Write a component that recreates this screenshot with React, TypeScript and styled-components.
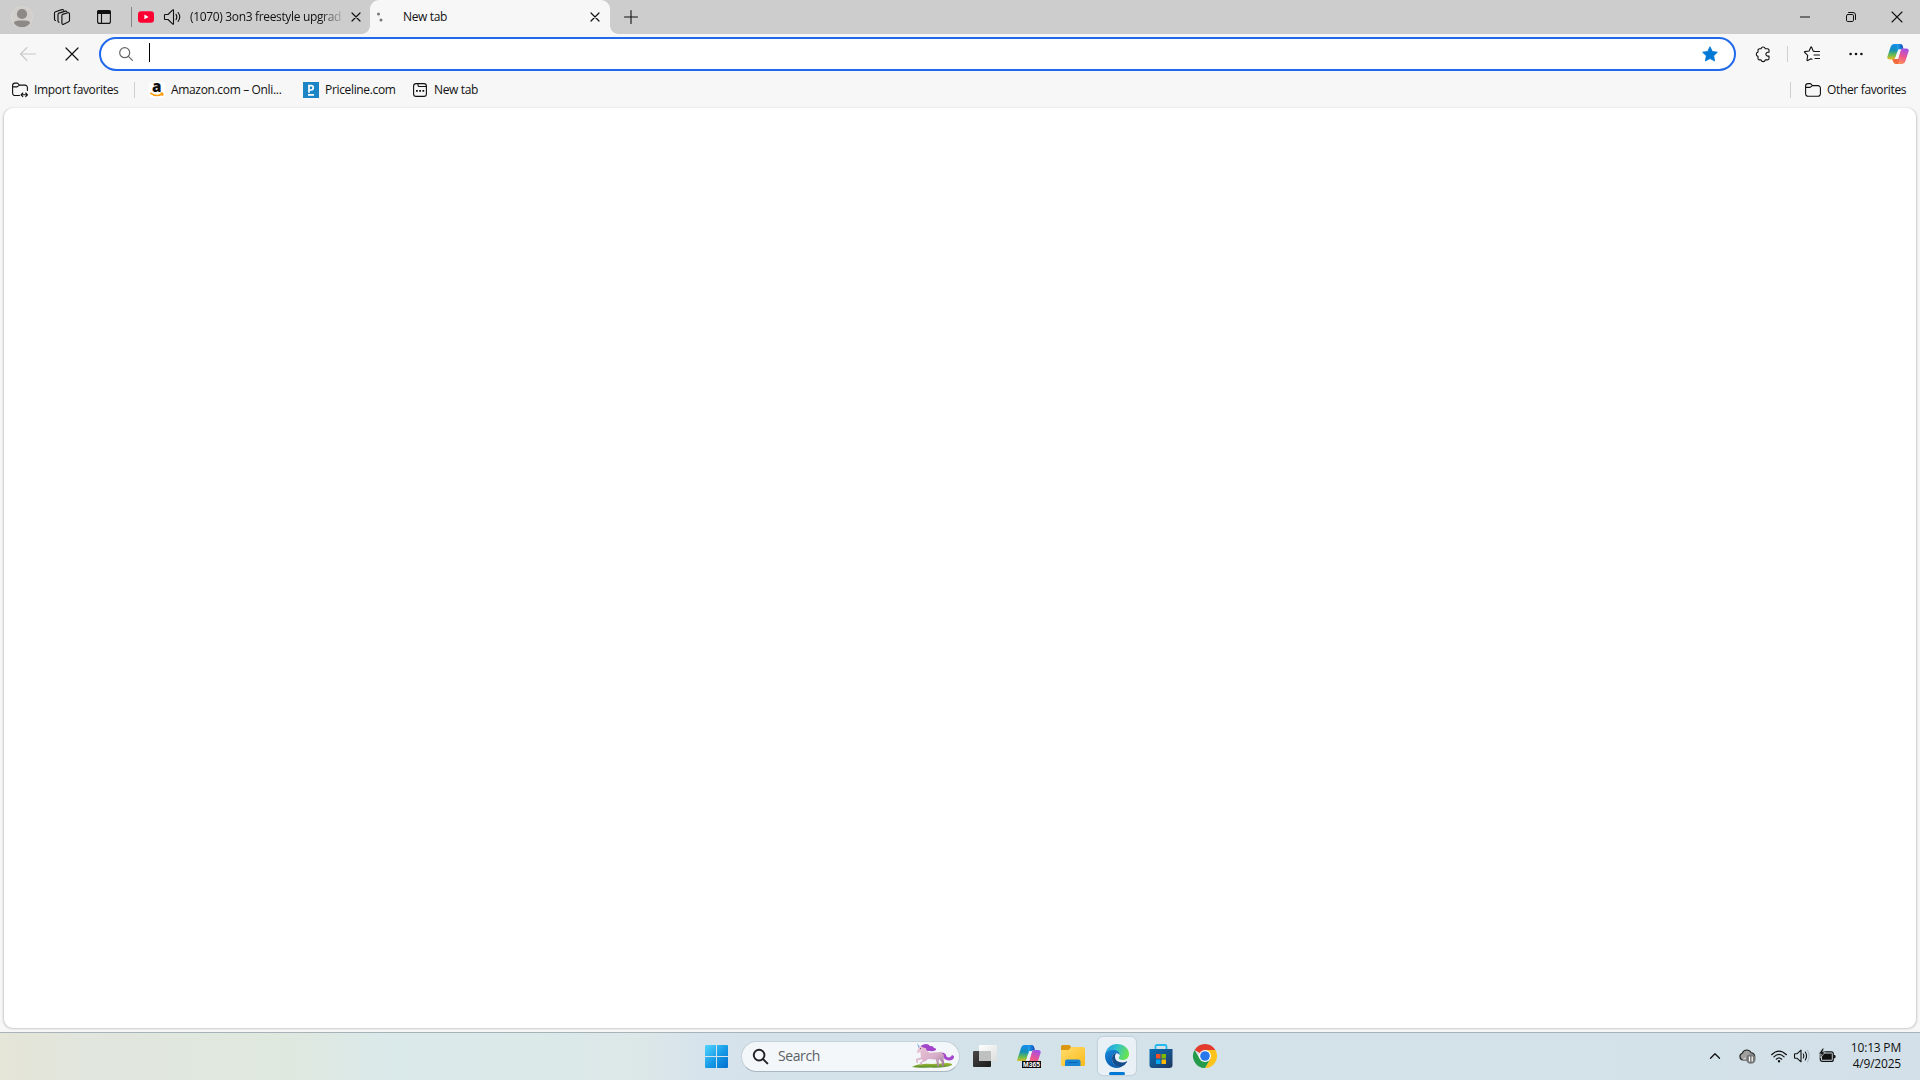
import React from "react";
import styled, { createGlobalStyle } from "styled-components";

const Global = createGlobalStyle`
  * { box-sizing: border-box; }
  body { margin: 0; overflow: hidden; background: #f7f7f7; }
  svg { display: block; flex: none; overflow: visible; }
`;

const Screen = styled.div`
  width: 1920px;
  height: 1080px;
  display: flex;
  flex-direction: column;
  background: #f7f7f7;
  font: 12px/16px "Segoe UI", "Open Sans", "Noto Sans", sans-serif;
  color: #111;
`;
const TabStrip = styled.header`
  height: 34px;
  display: flex;
  align-items: center;
  background: #cdcdcd;
`;
const Slot = styled.div<{ $w: number }>`
  width: ${(p) => p.$w}px;
  height: 100%;
  flex: none;
  display: flex;
  align-items: center;
  justify-content: center;
`;
const Divider = styled.i<{ $h: number; $color: string; $ml?: number; $mr?: number }>`
  width: 1px;
  height: ${(p) => p.$h}px;
  flex: none;
  margin: 0 ${(p) => p.$mr ?? 0}px 0 ${(p) => p.$ml ?? 0}px;
  background: ${(p) => p.$color};
`;
const Tab = styled.div<{ $active?: boolean }>`
  width: ${(p) => (p.$active ? 240 : 238)}px;
  height: 34px;
  flex: none;
  display: flex;
  align-items: center;
  padding-left: 6px;
  position: relative;
  border-radius: 9px 9px 0 0;
  background: ${(p) => (p.$active ? "#f7f7f7" : "transparent")};
  &::before, &::after {
    content: "";
    display: ${(p) => (p.$active ? "block" : "none")};
    position: absolute;
    bottom: 0;
    width: 8px;
    height: 8px;
  }
  &::before { left: -8px; background: radial-gradient(circle at 0 0, transparent 7.5px, #f7f7f7 8px); }
  &::after { right: -8px; background: radial-gradient(circle at 100% 0, transparent 7.5px, #f7f7f7 8px); }
`;
const Label = styled.span<{ $w: number; $fade?: boolean; $ml?: number }>`
  width: ${(p) => p.$w}px;
  flex: none;
  margin-left: ${(p) => p.$ml ?? 0}px;
  letter-spacing: -0.34px;
  white-space: nowrap;
  ${(p) => p.$fade && "mask-image: linear-gradient(90deg, #000 130px, rgba(0,0,0,.1) 153px);"}
`;
const Spacer = styled.div`flex: 1;`;

const Toolbar = styled.div`
  height: 40px;
  display: flex;
  align-items: center;
`;
const AddressBar = styled.div`
  width: 1637px;
  height: 34px;
  flex: none;
  display: flex;
  align-items: center;
  padding: 0 16px 0 18px;
  border: 2px solid #2169eb;
  border-radius: 17px;
  background: #fff;
`;
const Caret = styled.i`
  width: 1px;
  height: 19px;
  margin: -3px 0 0 16px;
  background: #000;
`;
const Favorites = styled.nav`
  height: 33px;
  display: flex;
  align-items: center;
  padding: 0 0 1px 12px;
`;
const Page = styled.main`
  height: 920px;
  margin: 1px 4px 4px;
  border-radius: 9px;
  background: #fff;
  box-shadow: 0 0.5px 2px 0.5px rgba(0, 0, 0, 0.18);
`;
const Taskbar = styled.footer`
  height: 48px;
  display: flex;
  align-items: center;
  padding-bottom: 1px;
  border-top: 1px solid #a8b2b9;
  background: linear-gradient(90deg, #e5e5d8 0, #e3e5da 50px, #e1e6de 80px, #dfe8df 290px, #dae9ea 390px, #dbe9e9 520px, #dce7e8 640px, #d7e3ec 700px, #d4e2ea 780px, #d3e1e9 1700px, #d3e0e9 1920px);
`;
const SearchBox = styled.div`
  width: 219px;
  height: 31px;
  flex: none;
  display: flex;
  align-items: center;
  margin-left: 13px;
  padding-left: 11px;
  border: 1px solid #c4d1d9;
  border-bottom-color: #a9b7c0;
  border-radius: 16px;
  background: #f3f7fa;
`;
const SearchText = styled.span`
  width: 134px;
  margin-left: 10px;
  font-size: 14px;
  line-height: 20px;
  letter-spacing: -0.4px;
  color: #5c6064;
`;
const AppButton = styled.div<{ $active?: boolean }>`
  width: 38px;
  height: 38px;
  flex: none;
  margin: 0 3px;
  display: flex;
  align-items: center;
  justify-content: center;
  position: relative;
  border-radius: 5px;
  background: ${(p) => (p.$active ? "#e9f1f7" : "transparent")};
  box-shadow: ${(p) => (p.$active ? "0 0 1px 1px rgba(130,150,165,.22)" : "none")};
  &::after {
    content: "";
    display: ${(p) => (p.$active ? "block" : "none")};
    position: absolute;
    bottom: 0;
    left: 11px;
    width: 16px;
    height: 3px;
    border-radius: 2px;
    background: #0078d4;
  }
`;
const Clock = styled.div`
  width: 52px;
  margin: 0 19px 0 5px;
  text-align: right;
  white-space: nowrap;
  letter-spacing: -0.2px;
`;

const stroke = { fill: "none", stroke: "#111", strokeWidth: 1.1, strokeLinecap: "round", strokeLinejoin: "round" } as const;

const Close = ({ s = 8, w = 1.2 }: { s?: number; w?: number }) => (
  <svg width={s} height={s} viewBox={`0 0 ${s} ${s}`} {...stroke} strokeWidth={w}>
    <path d={`M0 0 ${s} ${s}M${s} 0 0 ${s}`} />
  </svg>
);
const Avatar = () => (
  <svg width="22" height="22" viewBox="0 0 22 22">
    <circle cx="11" cy="11" r="10.5" fill="#d0cfcc" stroke="#dbd8d2" />
    <circle cx="11" cy="8" r="5.1" fill="#8d8986" />
    <path d="M3 17.3c0-2.6 3-2.8 8-2.8s8 .2 8 2.8C17 20 14.500 21.200 11 21.200S5 20 3 17.300Z" fill="#8d8986" />
  </svg>
);
const Workspaces = () => (
  <svg width="16" height="16" viewBox="0 0 16 16" {...stroke} strokeWidth={1.15}>
    <path d="m8.500 5.400 5.500-1.700a1.200 1.200 0 0 1 1.500 1.200v6.600a1.500 1.500 0 0 1-.9 1.300l-5 2.400a1.200 1.200 0 0 1-1.700-1V6.700a1.400 1.400 0 0 1 .6-1.300ZM5 13.300a1.500 1.500 0 0 1-1-1.300V5.500A1.500 1.500 0 0 1 5 4.100l6.400-2q1-.3 1.500.6M1.500 11.500a1.500 1.500 0 0 1-1-1.300V4.100a1.500 1.500 0 0 1 1-1.400L8 .6q1.200-.3 1.600.6" />
  </svg>
);
const TabActions = () => (
  <svg width="14" height="14" viewBox="0 0 14 14" {...stroke}>
    <rect x=".6" y=".6" width="12.800" height="12.800" rx="2" />
    <path d="M.6 3.500V2Q.6.600 2 .600h10q1.400 0 1.400 1.400v1.500Z" fill="#111" />
    <path d="M4.500 4v9" />
  </svg>
);
const YouTube = () => (
  <svg width="16" height="12" viewBox="0 0 16 12">
    <rect width="16" height="11.500" y=".2" rx="3" fill="#ff0033" />
    <path d="m6.400 3.500 4.200 2.400-4.200 2.400Z" fill="#fff" />
  </svg>
);
const Speaker = () => (
  <svg width="17" height="16" viewBox="0 0 17 16" {...stroke}>
    <path d="M1 5.500h3L8.800.9q.7-.5.7.4v13.400q0 .9-.7.4L4 10.500H1q-.5 0-.5-.5V6q0-.5.500-.5ZM12 5.300q1.700 2.700 0 5.400M14.100 3.500q3.300 4.500 0 9" />
  </svg>
);
const Spinner = () => (
  <svg width="8" height="12" viewBox="0 0 8 12" fill="#777">
    <circle cx="2.500" cy="3" r="1.500" /><circle cx="5" cy="9" r="1.500" /><circle cx="3" cy="6" r=".6" opacity=".3" />
  </svg>
);
const Plus = () => (
  <svg width="14" height="14" viewBox="0 0 14 14" {...stroke}><path d="M7 .5v13M.5 7h13" /></svg>
);
const Restore = () => (
  <svg width="10" height="10" viewBox="0 0 10 10" {...stroke} strokeWidth={1}>
    <rect x=".5" y="2.500" width="7" height="7" rx="1.300" /><path d="M2.500.5H7A2.500 2.500 0 0 1 9.500 3v4.500" />
  </svg>
);
const Back = () => (
  <svg width="16" height="14" viewBox="0 0 16 14" {...stroke} stroke="#c8c8c8"><path d="M7 .5.500 7 7 13.500M.5 7h15" /></svg>
);
const Search = ({ s = 14, c = "#666", w = 1.2 }: { s?: number; c?: string; w?: number }) => (
  <svg width={s} height={s} viewBox="0 0 14 14" {...stroke} stroke={c} strokeWidth={w}>
    <circle cx="5.700" cy="5.700" r="5" /><path d="m9.400 9.400 4 4" />
  </svg>
);
const starPath = "m8 .7 2.300 4.700 5.100.8-3.700 3.600.9 5.200L8 12.500 3.400 15l.9-5.200L.6 6.200l5.100-.8Z";
const Star = () => (
  <svg width="16" height="16" viewBox="0 0 16 16"><path d={starPath} fill="#0078d4" stroke="#0078d4" strokeWidth=".8" strokeLinejoin="round" /></svg>
);
const Puzzle = () => (
  <svg width="16" height="16" viewBox="0 0 16 16" {...stroke}>
    <path d="M4.500 2.800H6a2.200 2.200 0 0 1 4.300 0h2.200a1.500 1.500 0 0 1 1.500 1.500v2h-1.200a1.900 1.900 0 0 0 0 3.800H14v2.300a1.500 1.500 0 0 1-1.500 1.500h-2.200a2.200 2.200 0 0 1-4.300 0H4.500A1.500 1.500 0 0 1 3 12.400v-2a2.200 2.200 0 0 1 0-4.300V4.300a1.500 1.500 0 0 1 1.500-1.500Z" />
  </svg>
);
const StarList = () => (
  <svg width="16" height="16" viewBox="0 0 16 16" {...stroke}>
    <path d="M11 5.500 9.200 5.100 7.600 1.200q-.4-.8-.8 0L5.100 5l-4.200.6q-.8.200-.3.800l3.100 3-.7 4.600q0 .8.700.5l3.300-1.800 1 .5M11 5.500h4.500M10 9h5.500M11 12.500h4.500" />
  </svg>
);
const Dots = () => (
  <svg width="14" height="4" viewBox="0 0 14 4" fill="#111"><circle cx="1.600" cy="2" r="1.300" /><circle cx="7" cy="2" r="1.300" /><circle cx="12.400" cy="2" r="1.300" /></svg>
);
const Copilot = ({ id, m365 }: { id: string; m365?: boolean }) => (
  <svg width={m365 ? 24 : 22} height={m365 ? 24 : 22} viewBox="0 0 24 24">
    <defs>
      <linearGradient id={id + "a"} x1="0" y1="0" x2="0" y2="1">
        <stop stopColor="#168cf2" /><stop offset=".4" stopColor="#148eb5" /><stop offset=".7" stopColor="#66bc50" /><stop offset="1" stopColor="#efbc21" />
      </linearGradient>
      <linearGradient id={id + "b"} x1=".8" y1="0" x2=".4" y2="1">
        <stop stopColor="#9c50ed" /><stop offset=".5" stopColor="#ed538f" /><stop offset="1" stopColor="#ff9656" />
      </linearGradient>
      <linearGradient id={id + "c"}><stop stopColor="#1ca9ef" /><stop offset="1" stopColor="#1946b7" /></linearGradient>
      <clipPath id={id + "clip"}><path d={m365 ? "M0 0h24v17H0Z" : "M0 0h24v24H0Z"} /></clipPath>
    </defs>
    <g clipPath={`url(#${id}clip)`}>
      <path d="M12 7h3l2.500-2.500L16.700 2.500Q16 1 14 1H7.500Q5 1 4 4L.6 14.500Q-.6 18 3 18h3.500q2 0 2.700-2.300Z" fill={`url(#${id}a)`} />
      <path d="M11 1h3.500Q16.500 1 17 3l1 3.200h-3.800q-1.700 0-2.400 2l-1 3Z" fill={`url(#${id}c)`} />
      <path d="M12 17.500H8.800L6 18l1.200 3.300Q8 23 10 23h6.700q2.400 0 3.300-3l3.400-10.400Q24.600 6 21 6h-3.700q-1.900 0-2.600 2.300Z" fill={`url(#${id}b)`} />
      <path d="M12.400 7h2.700L12 17.500H8.900Z" fill={m365 ? "#eaf0f6" : "#f7f7f7"} />
      <path d="M5.500 17.700h6.400q1.500 0 1.200 1.500L12 23h-2q-2 0-2.700-2Z" fill="#f06132" opacity=".8" />
    </g>
    {m365 && <>
      <rect x="5" y="17" width="19" height="7" fill="#080808" />
      <text x="6" y="23" textLength="17" lengthAdjust="spacingAndGlyphs" fontSize="7" fontWeight="700" fontFamily="Liberation Sans, sans-serif" fill="#fff">M365</text>
    </>}
  </svg>
);
const Folder = ({ imported }: { imported?: boolean }) => (
  <svg width="16" height="16" viewBox="0 0 16 16" {...stroke}>
    <path d={imported ? "M7.500 13.500H3a2.400 2.400 0 0 1-2.400-2.400V3.500A2.400 2.400 0 0 1 3 1.100h2.500l2 2H13a2.400 2.400 0 0 1 2.400 2.400v3M.8 4.900h4.300l2.400-1.800M9 12.800h6.500M10.800 11 9 12.800l1.800 1.800M13.700 11l1.800 1.800-1.800 1.800" : "M3 1.600h2.500l2 2H13A2.400 2.400 0 0 1 15.400 6v5.800a2.400 2.400 0 0 1-2.400 2.400H3A2.400 2.400 0 0 1 .6 11.800V4A2.400 2.400 0 0 1 3 1.600ZM.8 5.400h4.300l2.400-1.800"} />
  </svg>
);
const AmazonTile = styled.div`
  width: 16px;
  height: 16px;
  flex: none;
  border-radius: 3px;
  background: #fff;
`;
const Amazon = () => (
  <AmazonTile>
    <svg width="16" height="16" viewBox="0 0 16 16">
      <text x="3" y="10.300" fontFamily="Open Sans, sans-serif" fontWeight="800" fontSize="15" textLength="9.500" lengthAdjust="spacingAndGlyphs" fill="#111">a</text>
      <path d="M1.200 10.800q6 4.800 12 1.200M11.600 11.100q3.200-.5 1.800 2.700" fill="none" stroke="#ff9b0b" strokeWidth="1.500" />
    </svg>
  </AmazonTile>
);
const Priceline = () => (
  <svg width="16" height="16" viewBox="0 0 16 16">
    <path fill="#1b85c6" d="M0 0h16v16H0z" />
    <path d="M6 10.800V3.700h2.100a2 2 0 0 1 0 4.300H6.500M5 12.800h6" fill="none" stroke="#fff" strokeWidth="1.700" />
  </svg>
);
const NewTabIcon = () => (
  <svg width="14" height="14" viewBox="0 0 14 14" {...stroke}>
    <rect x=".6" y=".6" width="12.800" height="12.800" rx="2.500" />
    <path d="M5 .7v1.500Q5 3.500 6.300 3.500h7" />
    <path d="M3 7h1.800v1.800H3zM6.200 7H8v1.800H6.200zM9.400 7h1.800v1.800H9.400z" fill="#111" stroke="none" />
  </svg>
);
const Windows = () => (
  <svg width="23" height="24" viewBox="0 -1 23 24">
    <linearGradient id="win" x1="0" y1="0" x2="1" y2="1"><stop stopColor="#50d5ff" /><stop offset=".55" stopColor="#1598e5" /><stop offset="1" stopColor="#006fce" /></linearGradient>
    <path fill="url(#win)" d="M1 0h10v11H0V1q0-1 1-1Zm11 0h10q1 0 1 1v10H12ZM0 12h11v11H1q-1 0-1-1Zm12 0h11v10q0 1-1 1H12Z" />
  </svg>
);
const Unicorn = () => (
  <svg width="42" height="26" viewBox="0 0 42 26">
    <defs>
      <linearGradient id="horse" x1="0" y1="0" x2="1" y2="1"><stop stopColor="#edc7d8" /><stop offset=".6" stopColor="#d6aec9" /><stop offset="1" stopColor="#9b7297" /></linearGradient>
      <linearGradient id="grass" x1="0" y1="0" x2="0" y2="1"><stop stopColor="#a7bd36" /><stop offset="1" stopColor="#578c2b" /></linearGradient>
    </defs>
    <path d="M0 24q7-4 20-3l15-1q6 .3 5 2-6 3-21 2.600Q5 25 0 24Z" fill="url(#grass)" />
    <path d="m5 0 3 4-1.500 1Z" fill="#75aee2" />
    <path d="M29 9.500q5 0 5.500 4 2.500 2 5-.5 1-1-.5-1 3.500.3 3 2.500-1 3-5 3-5-.5-6-4.500Z" fill="#a448cd" />
    <path d="m7 4 2-1 5 2 2 4q2 1 5 .5l8-.5 3 3-.5 4 .8 4-.9 3.500h-1.600l.3-3.500-3-4-.5 2.500.5 5h-1.700l-1.500-7-8-.5-2 2-4 1.500.4 2-1 .7-1.500-2.500 3-2-1-1.500-4 1 .2 3-1.700-.6-.5-3.700 5.200-1.700-.7-5.700-2 1.700-1.500-1.300Z" fill="url(#horse)" />
    <path d="M8.500 3q6.500-4 9.500 0 3.500-.5 4 2 2.500 0 2 2-4 2-7 .8-3 1-3-2.500Q11 5 8.500 3Z" fill="#a345cb" />
    <circle cx="8.500" cy="5.500" r=".5" fill="#402c50" />
  </svg>
);
const TaskView = () => (
  <svg width="24" height="24" viewBox="0 0 24 24">
    <defs><linearGradient id="tvd" x1="0" y1="0" x2="1" y2="1"><stop stopColor="#484746" /><stop offset="1" stopColor="#1c1b1b" /></linearGradient>
      <linearGradient id="tvl" x1="0" y1="0" x2="1" y2="1"><stop stopColor="#fff" /><stop offset="1" stopColor="#dcdddd" /></linearGradient></defs>
    <rect y="7" width="18" height="16" rx="1" fill="url(#tvd)" /><rect x="6" y="1" width="18" height="16" rx="1" fill="url(#tvl)" /><path fill="#bfc0c0" d="M6 7h12v10H7q-1 0-1-1Z" />
  </svg>
);
const Explorer = () => (
  <svg width="24" height="24" viewBox="0 0 24 24">
    <defs><linearGradient id="fold" x1="0" y1="0" x2="1" y2="1"><stop stopColor="#ffdd70" /><stop offset="1" stopColor="#fbba18" /></linearGradient></defs>
    <path d="M0 7V2.500Q0 1 1.500 1H8q1.500 0 2 2l-.5 3Z" fill="#dc9710" />
    <path d="M0 6h7.500L10.500 3h12Q24 3 24 4.500v16q0 1.500-1.500 1.500h-21Q0 22 0 20.500Z" fill="url(#fold)" />
    <path d="M4 22v-4.500q0-2 2-2h11.500q2 0 2 2V22Z" fill="#1684d2" /><path d="M8 18.500h8" stroke="#0864ae" strokeWidth="1.200" strokeLinecap="round" />
  </svg>
);
const Edge = () => (
  <svg width="24" height="24" viewBox="0 0 24 24">
    <defs>
      <linearGradient id="eg" x1="0" y1=".2" x2="1" y2=".5"><stop stopColor="#249be1" /><stop offset=".45" stopColor="#32c1cd" /><stop offset="1" stopColor="#69e44d" /></linearGradient>
      <linearGradient id="eb" x1="0" y1="0" x2=".4" y2="1"><stop stopColor="#1687d8" /><stop offset="1" stopColor="#0b5cb1" /></linearGradient>
    </defs>
    <path d="M.2 11C.8 4.200 6 0 12 0c7 0 12 4.500 12 10 0 3.700-2.800 6-6.200 6-3 0-4.100-1.100-4.100-2 0-.8 1.100-1.200 1.100-3 0-2.500-2.500-4.300-6-4.300-4 0-7 1.500-8.600 4.300Z" fill="url(#eg)" />
    <path d="M0 12c0-3.500 3.400-6 8-6 4.200 0 6.800 2 6.800 5-1-1.300-2.300-1.800-3.500-1.800C8.500 9.200 7 11.700 7 14.400c0 4.700 4 8.600 9 8.600-1.300.7-2.700 1-4 1C5.200 24 0 18.500 0 12Z" fill="url(#eb)" />
    <path d="M11.300 9.200C8.500 9.200 7 11.700 7 14.400 7 19.500 11.500 23.500 16 23q4-1.500 6-5c.3-.6 0-.8-.6-.5-5 2.200-11.400.2-11.400-4.800 0-1.700.7-2.700 1.300-3.500Z" fill="#154c8b" />
  </svg>
);
const Store = () => (
  <svg width="24" height="24" viewBox="0 0 24 24">
    <defs><linearGradient id="st" x1="0" y1="0" x2="1" y2="1"><stop stopColor="#0870b9" /><stop offset="1" stopColor="#20375f" /></linearGradient></defs>
    <path d="M6.500 6V2.500q0-1.500 1.500-1.500h8q1.500 0 1.500 1.500V6" fill="none" stroke="#24b9ec" strokeWidth="1.800" />
    <path d="M.5 5h23v16q0 3-3 3h-17q-3 0-3-3Z" fill="url(#st)" />
    <path fill="#f25022" d="M7 10h4.500v4.500H7z" /><path fill="#7fba00" d="M12.500 10H17v4.500h-4.500z" /><path fill="#00a4ef" d="M7 15.500h4.500V20H7z" /><path fill="#ffb900" d="M12.500 15.500H17V20h-4.500z" />
  </svg>
);
const Chrome = () => (
  <svg width="24" height="24" viewBox="0 0 24 24">
    <path d="M12 12 1.600 6a12 12 0 0 1 20.800 0Z" fill="#e33b2e" />
    <path d="M12 6h10.400A12 12 0 0 1 12 24l5.200-9Z" fill="#fcc31c" />
    <path d="M1.600 6A12 12 0 0 0 12 24l5.200-9H6.800Z" fill="#249b4b" />
    <circle cx="12" cy="12" r="6" fill="#fff" /><circle cx="12" cy="12" r="4.800" fill="#2878e9" />
  </svg>
);
const Chevron = () => <svg width="10" height="6" viewBox="0 0 10 6" {...stroke} strokeWidth={1.3}><path d="m.5 5.200 4.500-4.500 4.500 4.500" /></svg>;
const Cloud = () => (
  <svg width="17" height="16" viewBox="0 0 17 16">
    <path d="M4 12A3.500 3.500 0 0 1 3.300 5.200Q4.500 2 7.700 2q3 0 4.400 2.700 3 .2 3.700 3.300 0 3-2.800 4Z" fill="#a0a0a1" stroke="#222" strokeWidth="1.100" />
    <path d="M3 11.500 11 7l4 2v3Z" fill="#d0d0d0" /><circle cx="11.800" cy="11" r="4.800" fill="#777" /><path d="M10.500 8.500v5M13.200 8.500v5" stroke="#fff" strokeWidth="1.200" />
  </svg>
);
const Wifi = () => (
  <svg width="16" height="13" viewBox="0 0 16 13" {...stroke} strokeWidth={1.2}>
    <path d="M.6 4.700q7.400-7.200 14.800 0M2.900 6.900q5.100-5 10.200 0M5.300 9.200q2.700-2.600 5.400 0" /><circle cx="8" cy="11.200" r="1.200" fill="#111" stroke="none" />
  </svg>
);
const Volume = () => (
  <svg width="17" height="14" viewBox="0 0 17 14" {...stroke}>
    <path d="M1 4.700h2.200L7 1.200v11.600L3.200 9.300H1q-.5 0-.5-.5V5.200q0-.5.500-.5ZM9.300 5q1.200 2 0 4M11.300 3q2.500 4 0 8" /><path d="M13.500 1.200q3.500 5.800 0 11.600" stroke="#aebbc3" />
  </svg>
);
const Battery = () => (
  <svg width="17" height="14" viewBox="0 0 17 14">
    <rect x="1.300" y="2.800" width="13" height="9.600" rx="2" fill="none" stroke="#111" strokeWidth="1.200" /><path d="M2.900 4.400h9.900v6.400H2.900zM14.700 6h.8q1 0 1 1v1.200q0 1-1 1h-.8Z" fill="#111" />
    <path d="M3.500-.8-.4 5h2.600l-.6 3.700L6.300 3H3.700L5.200-.8Z" fill="#111" stroke="#d3e0e9" strokeWidth=".7" />
  </svg>
);

const Minimize = () => <svg width="10" height="2" viewBox="0 0 10 2"><path fill="#111" d="M0 .5h10v1H0z" /></svg>;

export default function App() {
  return (
    <Screen>
      <Global />
      <TabStrip>
        <Slot $w={44}><Avatar /></Slot>
        <Slot $w={36}><Workspaces /></Slot>
        <Slot $w={48}><TabActions /></Slot>
        <Divider $h={20} $color="#858585" $ml={3} />
        <Tab>
          <YouTube />
          <Slot $w={36}><Speaker /></Slot>
          <Label $w={153} $fade>(1070) 3on3 freestyle upgrad</Label>
          <Slot $w={25}><Close /></Slot>
        </Tab>
        <Tab $active>
          <Spinner />
          <Label $w={175} $ml={19}>New tab</Label>
          <Slot $w={33}><Close /></Slot>
        </Tab>
        <Slot $w={42}><Plus /></Slot>
        <Spacer />
        <Slot $w={46}><Minimize /></Slot>
        <Slot $w={46}><Restore /></Slot>
        <Slot $w={46}><Close s={10} w={1.1} /></Slot>
      </TabStrip>
      <Toolbar>
        <Slot $w={56}><Back /></Slot>
        <Slot $w={32}><Close s={12} /></Slot>
        <Slot $w={11} />
        <AddressBar><Search /><Caret /><Spacer /><Star /></AddressBar>
        <Slot $w={2} />
        <Slot $w={49}><Puzzle /></Slot>
        <Divider $h={16} $color="#d0d0d0" />
        <Slot $w={48}><StarList /></Slot>
        <Slot $w={40}><Dots /></Slot>
        <Slot $w={44}><Copilot id="cp" /></Slot>
      </Toolbar>
      <Favorites>
        <Folder imported />
        <Label $w={92} $ml={6}>Import favorites</Label>
        <Divider $h={16} $color="#cfcfcf" $ml={8} $mr={14} />
        <Amazon />
        <Label $w={132} $ml={6}>Amazon.com – Onli...</Label>
        <Priceline />
        <Label $w={88} $ml={6}>Priceline.com</Label>
        <NewTabIcon />
        <Label $w={60} $ml={7}>New tab</Label>
        <Spacer />
        <Divider $h={16} $color="#cfcfcf" $mr={14} />
        <Folder />
        <Label $w={93} $ml={6}>Other favorites</Label>
      </Favorites>
      <Page />
      <Taskbar>
        <Slot $w={705} />
        <Windows />
        <SearchBox><Search s={15} c="#222" w={1.8} /><SearchText>Search</SearchText><Unicorn /></SearchBox>
        <Slot $w={3} />
        <AppButton><TaskView /></AppButton>
        <AppButton><Copilot id="m" m365 /></AppButton>
        <AppButton><Explorer /></AppButton>
        <AppButton $active><Edge /></AppButton>
        <AppButton><Store /></AppButton>
        <AppButton><Chrome /></AppButton>
        <Spacer />
        <Slot $w={32}><Chevron /></Slot>
        <Slot $w={32}><Cloud /></Slot>
        <Slot $w={32}><Wifi /></Slot>
        <Slot $w={15}><Volume /></Slot>
        <Slot $w={34}><Battery /></Slot>
        <Clock>10:13 PM<br />4/9/2025</Clock>
      </Taskbar>
    </Screen>
  );
}
